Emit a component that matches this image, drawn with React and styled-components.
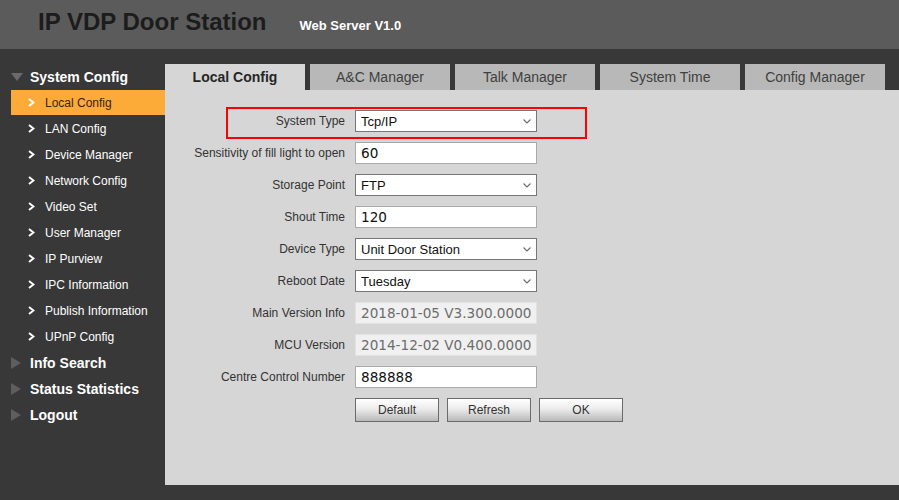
import React from "react";
import styled, { createGlobalStyle } from "styled-components";

const GlobalStyle = createGlobalStyle`
  html, body {
    margin: 0;
    padding: 0;
    background: #383838;
    font-family: "Liberation Sans", Arial, sans-serif;
  }
  #root {
    height: 500px;
  }
  * {
    box-sizing: border-box;
  }
`;

const menu = [
  {
    title: "System Config",
    open: true,
    items: [
      "Local Config",
      "LAN Config",
      "Device Manager",
      "Network Config",
      "Video Set",
      "User Manager",
      "IP Purview",
      "IPC Information",
      "Publish Information",
      "UPnP Config",
    ],
  },
  { title: "Info Search" },
  { title: "Status Statistics" },
  { title: "Logout" },
];

const tabs = [
  "Local Config",
  "A&C Manager",
  "Talk Manager",
  "System Time",
  "Config Manager",
];

const fields = [
  { label: "System Type", type: "select", value: "Tcp/IP" },
  { label: "Sensitivity of fill light to open", type: "text", value: "60" },
  { label: "Storage Point", type: "select", value: "FTP" },
  { label: "Shout Time", type: "text", value: "120" },
  { label: "Device Type", type: "select", value: "Unit Door Station" },
  { label: "Reboot Date", type: "select", value: "Tuesday" },
  { label: "Main Version Info", type: "readonly", value: "2018-01-05 V3.300.0000" },
  { label: "MCU Version", type: "readonly", value: "2014-12-02 V0.400.0000" },
  { label: "Centre Control Number", type: "text", value: "888888" },
];

const Page = styled.div`
  display: flex;
  flex-direction: column;
  height: 500px;
  background: #383838;
`;

const Header = styled.header`
  height: 49px;
  flex-shrink: 0;
  background: #5b5b5b;
  display: flex;
  align-items: baseline;
  padding: 10px 0 0 38px;
`;

const Title = styled.h1`
  margin: 0 33px 0 0;
  font-size: 24px;
  line-height: 24px;
  font-weight: bold;
  color: #1c1c1c;
`;

const Version = styled.span`
  font-size: 13px;
  font-weight: bold;
  color: #ffffff;
`;

const Body = styled.div`
  display: flex;
  flex: 1;
`;

const Sidebar = styled.nav`
  width: 165px;
  flex-shrink: 0;
  padding-top: 15px;
`;

const GroupTitle = styled.div`
  height: 26px;
  display: flex;
  align-items: center;
  padding-left: 11px;
  font-size: 14px;
  font-weight: bold;
  color: #ffffff;
`;

const Arrow = styled.span`
  width: 19px;
  display: flex;
  align-items: center;
`;

const Item = styled.div`
  height: 25px;
  margin: 0 0 1px 11px;
  padding-left: 17px;
  display: flex;
  align-items: center;
  font-size: 12px;
  color: ${(p) => (p.$active ? "#3a2412" : "#ffffff")};
  background: ${(p) => (p.$active ? "#fcaa38" : "transparent")};
`;

const Chevron = styled.svg`
  width: 7px;
  height: 9px;
  margin-right: 10px;
  flex-shrink: 0;
`;

const Main = styled.main`
  flex: 1;
  padding-top: 15px;
  display: flex;
  flex-direction: column;
`;

const TabBar = styled.div`
  display: flex;
  gap: 5px;
  height: 26px;
`;

const Tab = styled.div`
  width: 140px;
  display: flex;
  align-items: center;
  justify-content: center;
  font-size: 14px;
  font-weight: ${(p) => (p.$active ? "bold" : "normal")};
  color: ${(p) => (p.$active ? "#262626" : "#404040")};
  background: ${(p) => (p.$active ? "#d6d6d6" : "#b8b8b8")};
`;

const Panel = styled.section`
  position: relative;
  height: 395px;
  background: #d6d6d6;
  padding-top: 20px;
`;

const Highlight = styled.div`
  position: absolute;
  left: 61px;
  top: 17px;
  width: 361px;
  height: 32px;
  border: 2px solid #ff0000;
  pointer-events: none;
`;

const Form = styled.div`
  display: grid;
  grid-template-columns: 180px 182px;
  column-gap: 10px;
  row-gap: 10px;
  align-items: center;
`;

const Label = styled.label`
  text-align: right;
  font-size: 12px;
  color: #333333;
  white-space: nowrap;
`;

const SelectWrap = styled.div`
  position: relative;
  height: 22px;
`;

const Select = styled.select`
  appearance: none;
  width: 182px;
  height: 22px;
  margin: 0;
  padding: 0 0 0 5px;
  border: 1px solid #767676;
  border-radius: 0;
  background: #ffffff;
  font-family: "Liberation Sans", Arial, sans-serif;
  font-size: 13px;
  color: #111111;
  outline: none;
`;

const SelectArrow = styled.svg`
  position: absolute;
  right: 6px;
  top: 9px;
  width: 8px;
  height: 5px;
  pointer-events: none;
`;

const Input = styled.input`
  width: 182px;
  height: 22px;
  margin: 0;
  padding: 0 0 0 5px;
  border: 1px solid ${(p) => (p.readOnly ? "#e2e2e2" : "#a9a9a9")};
  background: ${(p) => (p.readOnly ? "#f0f0f0" : "#ffffff")};
  color: ${(p) => (p.readOnly ? "#6d6d6d" : "#111111")};
  font-family: "DejaVu Sans", Verdana, sans-serif;
  font-size: 13.6px;
  outline: none;
`;

const Buttons = styled.div`
  grid-column: 2;
  display: flex;
  gap: 8px;
`;

const Button = styled.button`
  flex-shrink: 0;
  width: 84px;
  height: 24px;
  border: 1px solid #6b6b6b;
  border-radius: 0;
  background: linear-gradient(#ffffff 0%, #ececec 45%, #d0d0d0 75%, #b9b9b9 100%);
  font-family: "Liberation Sans", Arial, sans-serif;
  font-size: 12px;
  color: #333333;
  padding: 0;
`;

const DownTriangle = () => (
  <svg width="12" height="8" viewBox="0 0 12 8">
    <polygon points="0,0 12,0 6,8" fill="#6a6a6a" />
  </svg>
);

const RightTriangle = () => (
  <svg width="10" height="12" viewBox="0 0 10 12">
    <polygon points="0,0 10,6 0,12" fill="#5e5e5e" />
  </svg>
);

const Field = ({ field }) => {
  if (field.type === "select") {
    return (
      <SelectWrap>
        <Select defaultValue={field.value}>
          <option>{field.value}</option>
        </Select>
        <SelectArrow viewBox="0 0 8 5">
          <polyline points="0.5,0.5 4,4 7.5,0.5" fill="none" stroke="#6f6f6f" strokeWidth="1.2" />
        </SelectArrow>
      </SelectWrap>
    );
  }
  return <Input defaultValue={field.value} readOnly={field.type === "readonly"} />;
};

export default function App() {
  return (
    <>
      <GlobalStyle />
      <Page>
        <Header>
          <Title>IP VDP Door Station</Title>
          <Version>Web Server V1.0</Version>
        </Header>
        <Body>
          <Sidebar>
            {menu.map((group) => (
              <div key={group.title}>
                <GroupTitle>
                  <Arrow>{group.open ? <DownTriangle /> : <RightTriangle />}</Arrow>
                  {group.title}
                </GroupTitle>
                {group.items &&
                  group.items.map((item, i) => (
                    <Item key={item} $active={i === 0}>
                      <Chevron viewBox="0 0 7 9">
                        <polyline points="1,1 5.5,4.5 1,8" fill="none" stroke="#ffffff" strokeWidth="2" />
                      </Chevron>
                      {item}
                    </Item>
                  ))}
              </div>
            ))}
          </Sidebar>
          <Main>
            <TabBar>
              {tabs.map((t, i) => (
                <Tab key={t} $active={i === 0}>
                  {t}
                </Tab>
              ))}
            </TabBar>
            <Panel>
              <Highlight />
              <Form>
                {fields.map((f) => (
                  <React.Fragment key={f.label}>
                    <Label>{f.label}</Label>
                    <Field field={f} />
                  </React.Fragment>
                ))}
                <Buttons>
                  <Button>Default</Button>
                  <Button>Refresh</Button>
                  <Button>OK</Button>
                </Buttons>
              </Form>
            </Panel>
          </Main>
        </Body>
      </Page>
    </>
  );
}
